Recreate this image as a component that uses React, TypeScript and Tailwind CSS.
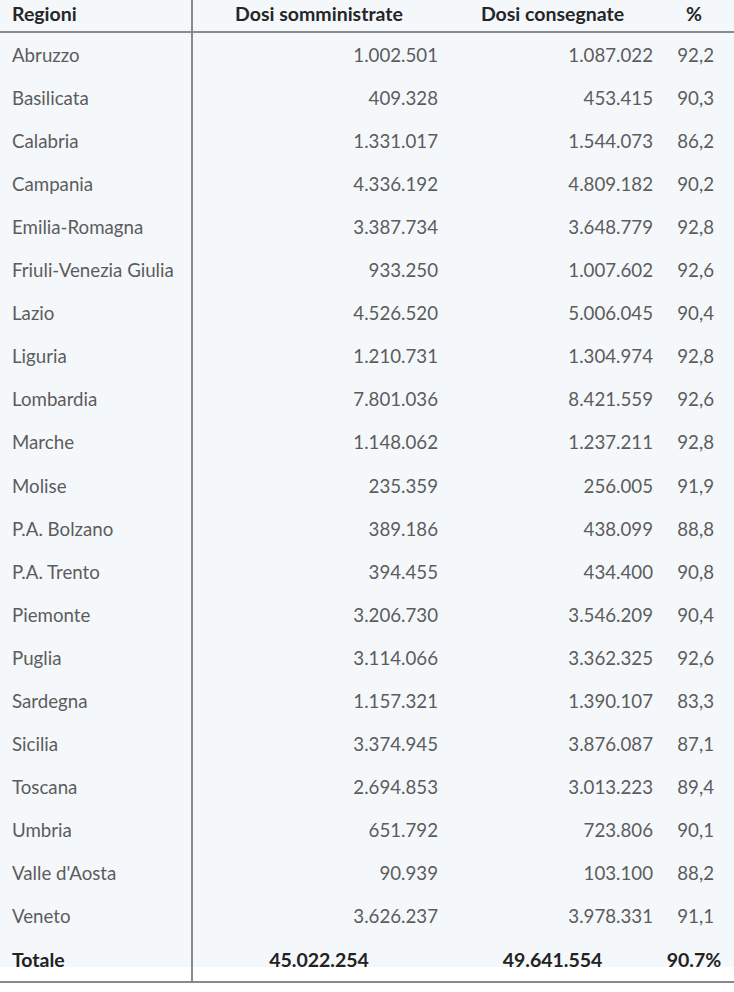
const rows: [string, string, string, string][] = [
  ["Abruzzo", "1.002.501", "1.087.022", "92,2"],
  ["Basilicata", "409.328", "453.415", "90,3"],
  ["Calabria", "1.331.017", "1.544.073", "86,2"],
  ["Campania", "4.336.192", "4.809.182", "90,2"],
  ["Emilia-Romagna", "3.387.734", "3.648.779", "92,8"],
  ["Friuli-Venezia Giulia", "933.250", "1.007.602", "92,6"],
  ["Lazio", "4.526.520", "5.006.045", "90,4"],
  ["Liguria", "1.210.731", "1.304.974", "92,8"],
  ["Lombardia", "7.801.036", "8.421.559", "92,6"],
  ["Marche", "1.148.062", "1.237.211", "92,8"],
  ["Molise", "235.359", "256.005", "91,9"],
  ["P.A. Bolzano", "389.186", "438.099", "88,8"],
  ["P.A. Trento", "394.455", "434.400", "90,8"],
  ["Piemonte", "3.206.730", "3.546.209", "90,4"],
  ["Puglia", "3.114.066", "3.362.325", "92,6"],
  ["Sardegna", "1.157.321", "1.390.107", "83,3"],
  ["Sicilia", "3.374.945", "3.876.087", "87,1"],
  ["Toscana", "2.694.853", "3.013.223", "89,4"],
  ["Umbria", "651.792", "723.806", "90,1"],
  ["Valle d'Aosta", "90.939", "103.100", "88,2"],
  ["Veneto", "3.626.237", "3.978.331", "91,1"],
];

const cols = "grid grid-cols-[193px_252px_215px_68px]";

export default function App() {
  return (
    <div className="h-[992px] w-[734px] bg-white font-['Lato',sans-serif] text-[18.7px]">
      <div className="bg-[linear-gradient(#f5f8fb_0,#f5f8fb_967px,#fff_967px)]">
        {/* header */}
        <div className={`${cols} h-[33px] border-b-2 border-[#8a8a8a] text-[19.5px] font-bold text-[#262626]`}>
          <div className="border-r-2 border-[#8a8a8a] pl-3 leading-[28px]">Regioni</div>
          <div className="text-center leading-[28px]">Dosi somministrate</div>
          <div className="text-center leading-[28px]">Dosi consegnate</div>
          <div className="text-center leading-[28px]">%</div>
        </div>
        {rows.map(([name, somm, cons, pct], i) => {
          const pad = i > 9 ? "pt-[4px]" : "pt-[2px]";
          return (
            <div key={name} className={`${cols} h-[43px] text-[#5c5c5c]`}>
              <div className={`flex items-center border-r-2 border-[#8a8a8a] pl-3 ${pad}`}>{name}</div>
              <div className={`flex items-center justify-end pr-[7px] ${pad}`}>{somm}</div>
              <div className={`flex items-center justify-end pr-[7px] ${pad}`}>{cons}</div>
              <div className={`flex items-center justify-end pr-[14px] ${pad}`}>{pct}</div>
            </div>
          );
        })}
        {/* totals */}
        <div className={`${cols} h-[47px] border-b-2 border-[#8a8a8a] text-[19.5px] font-bold text-[#222]`}>
          <div className="flex items-center border-r-2 border-[#8a8a8a] pl-3 pt-[2px]">Totale</div>
          <div className="flex items-center justify-center pt-[2px]">45.022.254</div>
          <div className="flex items-center justify-center pt-[2px]">49.641.554</div>
          <div className="flex items-center justify-center pt-[2px]">90.7%</div>
        </div>
      </div>
    </div>
  );
}
